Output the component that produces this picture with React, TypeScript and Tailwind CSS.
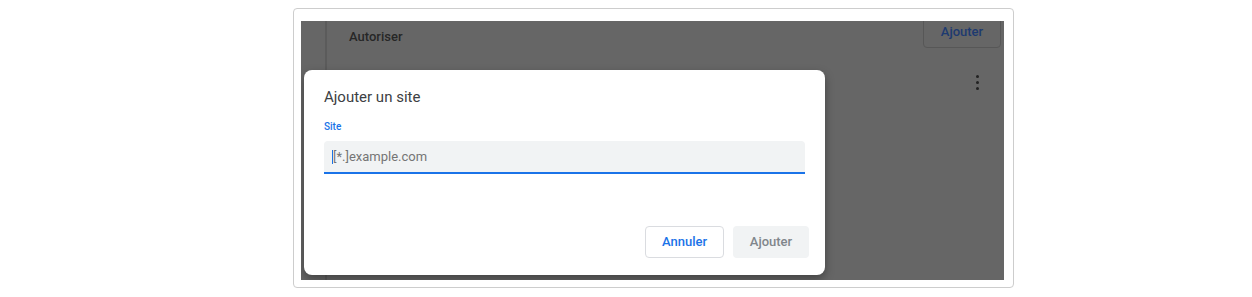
export default function App() {
  return (
    <div className="w-[1252px] h-[297px] bg-white pl-[293px] pt-[8px] font-['Roboto',sans-serif]">
      <div className="w-[721px] h-[280px] border border-[#cdcdcd] rounded-[4px] pl-[7px] pt-[12px]">
        <div className="relative w-[703px] h-[259px] bg-[#666666] overflow-hidden">
          {/* dimmed page behind the dialog */}
          <div className="flex h-full">
            <div className="w-[26px] h-full border-r-2 border-[#5b5b5b]" />
            <div className="flex-1 flex flex-col pl-[22px] pr-[3px]">
              <div className="flex items-start justify-between">
                <span className="mt-[6px] text-[13px] font-medium text-[#262626]">Autoriser</span>
                <div className="-mt-[6px] w-[78px] h-[33px] border border-[#575757] rounded-[4px] flex items-center justify-center text-[13px] font-medium text-[#1d3a70]">
                  Ajouter
                </div>
              </div>
              <div className="flex justify-end pr-[22px] mt-[27px]">
                <div className="flex flex-col gap-[3px]">
                  <span className="w-[3px] h-[3px] rounded-full bg-[#222]" />
                  <span className="w-[3px] h-[3px] rounded-full bg-[#222]" />
                  <span className="w-[3px] h-[3px] rounded-full bg-[#222]" />
                </div>
              </div>
            </div>
          </div>

          {/* dialog */}
          <div className="absolute left-[3px] top-[49px] w-[521px] h-[205px] bg-white rounded-[8px] shadow-[0_4px_10px_rgba(0,0,0,0.35)] flex flex-col pl-[20px] pr-[16px] pt-[17px] pb-[17px]">
            <h2 className="text-[15px] leading-[20px] text-[#3c4043]">Ajouter un site</h2>
            <label className="mt-[15px] text-[10px] leading-[10px] font-medium text-[#1a73e8]">Site</label>
            <div className="mt-[9px] mr-[4px] h-[33px] bg-[#f1f3f4] rounded-t-[4px] border-b-2 border-[#1a73e8] flex items-center pl-[8px]">
              <span className="w-px h-[14px] bg-[#1a73e8]" />
              <span className="text-[13px] text-[#757575]">[*.]example.com</span>
            </div>
            <div className="mt-auto flex justify-end gap-[9px]">
              <button className="w-[79px] h-[32px] border border-[#dadce0] rounded-[4px] bg-white text-[13px] font-medium text-[#1a73e8]">
                Annuler
              </button>
              <button className="w-[76px] h-[32px] rounded-[4px] bg-[#f1f3f4] text-[13px] font-medium text-[#80868b]">
                Ajouter
              </button>
            </div>
          </div>
        </div>
      </div>
    </div>
  );
}
